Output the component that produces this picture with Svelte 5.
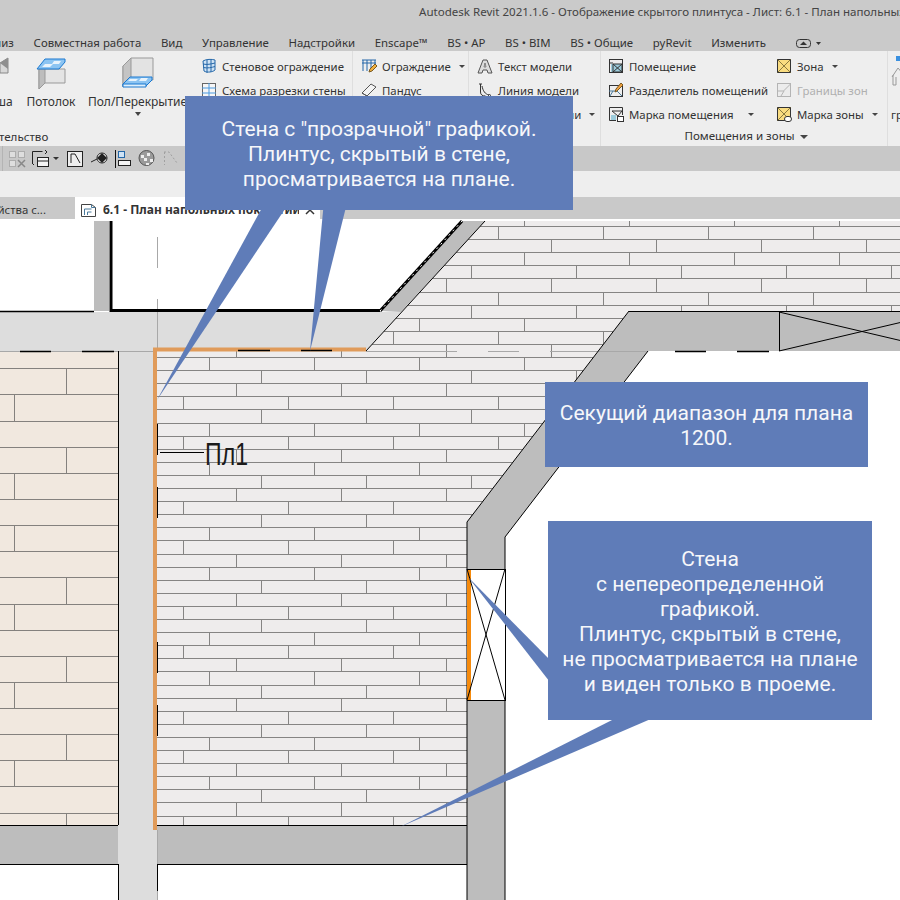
<script>
  const menu = ['Совместная работа', 'Вид', 'Управление', 'Надстройки', 'Enscape™', 'BS • AP', 'BS • BIM', 'BS • Общие', 'pyRevit', 'Изменить'];

  // плитка справа: шаг рядов 13.1, сдвиг швов повторяется через 8 рядов
  const phaseX = { 1: 235.5, 2: 261.3, 3: 183.3, 4: 209.3 };
  const cycle = [1, 4, 2, 1, 3, 2, 4, 3];
  let tileLines = '';
  let tileJoints = '';
  for (let k = -11; k <= 36; k++) {
    const bottom = Math.round(357 + 13.1 * k);
    const top = Math.round(357 + 13.1 * (k - 1));
    tileLines += `M150 ${bottom + 0.5}H900`;
    const base = phaseX[cycle[((k % 8) + 8) % 8]] % 105;
    for (let x = base; x < 900; x += 105) {
      tileJoints += `M${Math.round(x) + 0.5} ${top}V${bottom}`;
    }
  }

  // плитка слева: шаг рядов 26.13, швы перечислены по рядам сверху вниз
  const beigeRows = [0, 66, 14, 0, 66, 14, 0, 14, 0, 66, 14, 0, 66, 14, 0, 66, 14, 0, 66];
  let beigeLines = '';
  let beigeJoints = '';
  beigeRows.forEach((x, i) => {
    const top = Math.round(342.2 + 26.13 * i);
    const bottom = Math.round(342.2 + 26.13 * (i + 1));
    beigeLines += `M0 ${bottom + 0.5}H118`;
    if (x) beigeJoints += `M${x + 0.5} ${top}V${bottom}`;
  });
</script>

<div class="page">
  <header class="titlebar">Autodesk Revit 2021.1.6 - Отображение скрытого плинтуса - Лист: 6.1 - План напольных покрытий</header>

  <nav class="menu">
    <span class="clipped">Анализ</span>
    {#each menu as item}
      <span>{item}</span>
    {/each}
    <svg class="menu-toggle" width="26" height="12" viewBox="0 0 26 12">
      <rect x="0.5" y="2.5" width="14" height="8" rx="3" fill="none" stroke="#333" />
      <path d="M4 8h7L7.500 4.500z" fill="#333" />
      <path d="M20 5h5l-2.500 3z" fill="#333" />
    </svg>
  </nav>

  <section class="ribbon">
    <div class="group g1">
      <div class="bigs">
        <div class="big krysha">
          <svg width="40" height="34" viewBox="0 0 40 34">
            <path d="M28 7l8-5v15h-8z" fill="#d8d8d8" stroke="#888" />
            <path d="M36 2l-8 5 8 6z" fill="#8f8f8f" />
          </svg>
          <span>Крыша</span>
        </div>
        <div class="big potolok">
          <svg width="34" height="34" viewBox="0 0 34 34">
            <path d="M5 13h26v14H11l-6 6z" fill="#e4e4e4" stroke="#999" />
            <path d="M5 13v20l6-6V13z" fill="#bdbdbd" stroke="#999" />
            <path d="M3 13L11 3h20v3l-6 7z" fill="#8cc4f2" stroke="#1a78d0" />
            <path d="M11 8h8l-3 3H8zM20 5h7l-2 3h-7z" fill="#e8f3fc" />
          </svg>
          <span>Потолок</span>
        </div>
        <div class="big pol">
          <svg width="34" height="34" viewBox="0 0 34 34">
            <path d="M2 10l8-8h22v22H10L2 31z" fill="#e3e3e3" stroke="#999" />
            <path d="M2 10l8-8v22l-8 7z" fill="#c4c4c4" stroke="#999" />
            <path d="M2 28l7-7h22v3l-6 6H2z" fill="#8cc4f2" stroke="#1a78d0" />
            <path d="M7 25h8l2-2H9zM18 25h7l2-3h-7z" fill="#e8f3fc" />
            <path d="M2 28v3h23v-3z" fill="#dff0fc" stroke="#1a78d0" />
          </svg>
          <span>Пол/Перекрытие</span>
          <i class="caret"></i>
        </div>
      </div>
      <div class="group-label clipped-label">Строительство</div>
    </div>

    <div class="group g2">
      <div class="row">
        <svg width="16" height="16" viewBox="0 0 16 16" fill="none" stroke="#2467a8">
          <path d="M2 3c3-2 9-2 12-1v10c-2 2-8 3-11 1z" fill="#cfe3f5" />
          <path d="M2 6c4 1 8 0 12-1M2.500 9.500c4 1 8 0 11.500-1M6 2v13M10 2v12" />
        </svg>
        <span>Стеновое ограждение</span>
      </div>
      <div class="row">
        <svg width="16" height="16" viewBox="0 0 16 16" fill="none">
          <rect x="1.500" y="1.500" width="13" height="13" fill="#f6f6f6" stroke="#666" />
          <path d="M1 6h14M1 11h14M8 1v14" stroke="#4a9ae0" />
        </svg>
        <span>Схема разрезки стены</span>
      </div>
      <div class="row"><span class="spacer"></span><span>Импост</span></div>
    </div>

    <div class="group g3">
      <div class="row">
        <svg width="16" height="16" viewBox="0 0 16 16" fill="none">
          <path d="M1 2h14M1 5h14M2 2v11M6 2v11M10 2v8M14 2v5" stroke="#2467a8" />
          <path d="M8 14l1-3 5-5 2 2-5 5z" fill="#f0b040" stroke="#7a5a20" />
        </svg>
        <span>Ограждение</span>
        <i class="tri"></i>
      </div>
      <div class="row">
        <svg width="16" height="16" viewBox="0 0 16 16" fill="#f4f4f4" stroke="#555">
          <path d="M1 11l9-9 5 3-9 9z" />
          <path d="M1 11l5 3" />
        </svg>
        <span>Пандус</span>
      </div>
      <div class="row"><span class="spacer"></span><span>Лестница</span></div>
    </div>

    <div class="group g4">
      <div class="row">
        <svg width="16" height="16" viewBox="0 0 16 16">
          <path d="M6 2h4l5 13h-4l-1-3H6l-1 3H1z" fill="#ddd" stroke="#555" />
          <path d="M7 9h2L8 5z" fill="#fff" stroke="#555" stroke-width="0.700" />
        </svg>
        <span>Текст модели</span>
      </div>
      <div class="row">
        <svg width="16" height="16" viewBox="0 0 16 16" fill="none" stroke="#333">
          <path d="M2 2h3M3.500 2v8c0 3 2 4 5 4M5 4c1 5 3 8 7 9" />
          <circle cx="12.500" cy="13.500" r="1" />
        </svg>
        <span>Линия модели</span>
      </div>
      <div class="row">
        <span class="spacer"></span>
        <span>Группа модели</span>
        <i class="tri"></i>
      </div>
    </div>

    <div class="group g5">
      <div class="cols">
        <div class="col">
          <div class="row">
            <svg width="16" height="16" viewBox="0 0 16 16" fill="none">
              <rect x="1.500" y="1.500" width="13" height="13" stroke="#333" />
              <rect x="3" y="6" width="11" height="8" fill="#9cccdc" />
              <path d="M5 6h9v8H5zM5 6l9 8M14 6l-9 8M1 5h4" stroke="#333" />
            </svg>
            <span>Помещение</span>
          </div>
          <div class="row">
            <svg width="16" height="16" viewBox="0 0 16 16" fill="none">
              <rect x="1.500" y="3.500" width="13" height="11" stroke="#333" />
              <path d="M1 9h8l5 5M5 9l-3 5" stroke="#4a7a9c" />
              <path d="M7 10l1-3 5-6 2 2-6 6z" fill="#f0a040" stroke="#7a5a20" />
            </svg>
            <span>Разделитель помещений</span>
          </div>
          <div class="row">
            <svg width="16" height="16" viewBox="0 0 16 16" fill="none">
              <path d="M8 14.500H1.500v-13h13V9" stroke="#333" />
              <path d="M4 5h10M4 5l6 5 4-5" stroke="#333" />
              <rect x="3" y="9" width="5" height="5" fill="#9cccdc" />
              <rect x="9.500" y="10.500" width="6" height="5" fill="#fff" stroke="#333" />
            </svg>
            <span>Марка помещения</span>
            <i class="tri wide"></i>
          </div>
        </div>
        <div class="col second">
          <div class="row">
            <svg width="16" height="16" viewBox="0 0 16 16" fill="#f9dc80" stroke="#333">
              <rect x="1.500" y="1.500" width="13" height="13" />
              <path d="M1.500 1.500l13 13M14.500 1.500l-13 13" fill="none" stroke="#8a7a40" />
            </svg>
            <span class="zona">Зона</span>
            <i class="tri"></i>
          </div>
          <div class="row dim">
            <svg width="16" height="16" viewBox="0 0 16 16" fill="#ececec" stroke="#b4b4b4">
              <rect x="1.500" y="1.500" width="13" height="13" />
              <path d="M1.500 9h6l7-7M5 14l3-5" fill="none" />
            </svg>
            <span>Границы зон</span>
          </div>
          <div class="row">
            <svg width="16" height="16" viewBox="0 0 16 16" stroke="#333">
              <rect x="1.500" y="1.500" width="13" height="13" fill="#f9dc80" />
              <path d="M1.500 1.500l13 13M14.500 1.500l-13 13" fill="none" stroke="#8a7a40" />
              <rect x="8.500" y="10.500" width="7" height="5" rx="2.500" fill="#fff" />
            </svg>
            <span>Марка зоны</span>
            <i class="tri"></i>
          </div>
        </div>
      </div>
      <div class="group-label">Помещения и зоны <i class="tri label-tri"></i></div>
    </div>

    <div class="group g6">
      <svg width="14" height="36" viewBox="0 0 14 36" fill="none" stroke="#999">
        <rect x="5" y="1" width="6" height="5" fill="#3a90e0" stroke="none" />
        <path d="M1 22l6-9 6 7M2 20v10h3v-8" />
      </svg>
      <span class="g6-text">гр</span>
    </div>
  </section>

  <div class="toolbar">
    <svg width="200" height="25" viewBox="0 146 200 25" fill="none">
      <path d="M2.500 146v25" stroke="#b4b4b4" />
      <g stroke="#adadad">
        <rect x="9.500" y="151.500" width="6" height="6" fill="#dedede" />
        <rect x="18.500" y="151.500" width="6" height="6" fill="#dedede" />
        <rect x="9.500" y="160.500" width="6" height="6" fill="#dedede" />
        <path d="M18 160l7 7M25 160l-7 7" stroke="#888" stroke-width="1.500" />
      </g>
      <g stroke="#222">
        <path d="M32.500 163v-11.500h10" />
        <rect x="37.500" y="157.500" width="11" height="9" fill="#f4f4f4" />
        <path d="M37 161h12M45 150l2 2-2 2M32 163l2 2" />
      </g>
      <path d="M53 157h6l-3 3z" fill="#333" />
      <rect x="67.500" y="151.500" width="15" height="15" fill="#eee" stroke="#222" />
      <path d="M71 154v9M71 154h4l5 9" stroke="#222" />
      <path d="M91 162l6-3" stroke="#222" />
      <circle cx="102" cy="158" r="5" fill="#fff" stroke="#222" />
      <path d="M97 158l5-5 5 5-5 5z" fill="#222" />
      <path d="M115.500 150v18" stroke="#111" />
      <rect x="118.500" y="151.500" width="6" height="6" fill="#cfe3f5" stroke="#2467a8" />
      <rect x="118.500" y="160.500" width="12" height="5" fill="#f4f4f4" stroke="#222" />
      <circle cx="146.500" cy="158" r="7.500" fill="#9a9a9a" stroke="#555" />
      <path d="M141 155h3v3h-3zM147 153h3v3h-3zM144 158h3v3h-3zM150 159h3v3h-3zM146 163h3v2h-3z" fill="#ededed" />
      <path d="M164.500 152v13M164 152h5l8 11" stroke="#a0a0a0" stroke-dasharray="2 2" />
    </svg>
  </div>

  <div class="blank-strip"></div>

  <div class="tabs">
    <span class="tab-inactive">Свойства с...</span>
    <div class="tab-active">
      <svg width="17" height="16" viewBox="0 0 17 16" fill="none" stroke="#444">
        <path d="M1.500 2.500h10l4 3v9h-14z" fill="#fff" />
        <path d="M11.500 2.500v3h4M4.500 13v-6h7M7.500 13v-3h4" stroke="#4a7a9c" />
      </svg>
      <span>6.1 - План напольных покрытий...</span>
      <svg class="tab-close" width="10" height="10" viewBox="0 0 10 10">
        <path d="M1 1l8 8M9 1l-8 8" stroke="#333" stroke-width="1.500" />
      </svg>
    </div>
  </div>

  <!-- чертёж -->
  <svg class="plan" width="900" height="681" viewBox="0 219 900 681">
    <defs>
      <clipPath id="tileClip">
        <polygon points="485,221 900,221 900,311 629,311 467,522 467,825 157,825 157,351 366,351" />
      </clipPath>
    </defs>

    <!-- тонированные полы -->
    <rect x="0" y="351" width="118" height="474" fill="#f1e8df" />
    <path d={beigeLines} stroke="#84817e" fill="none" shape-rendering="crispEdges" />
    <path d={beigeJoints} stroke="#84817e" fill="none" shape-rendering="crispEdges" />

    <polygon points="485,221 900,221 900,311 629,311 467,522 467,825 157,825 157,351 366,351" fill="#eeecec" />
    <g clip-path="url(#tileClip)" shape-rendering="crispEdges">
      <path d={tileLines} stroke="#858483" fill="none" />
      <path d={tileJoints} stroke="#858483" fill="none" />
    </g>

    <!-- стены -->
    <polygon points="380,311 462,221 485,221 401,312" fill="#bdbdbd" />
    <rect x="94" y="221" width="15" height="90" fill="#bdbdbd" />
    <polygon points="0,312 401,312 366,351 0,351" fill="#dddddd" />
    <rect x="118" y="312" width="39" height="588" fill="#dddddd" />
    <rect x="0" y="825" width="118" height="39" fill="#bdbdbd" />
    <rect x="157" y="825" width="310" height="39" fill="#bdbdbd" />
    <polygon points="629,311 900,311 900,351 648,351 505,537 505,900 467,900 467,522" fill="#bdbdbd" />

    <!-- линии секущего диапазона -->
    <g fill="none" stroke="#a8a8a8">
      <path d="M0 351.500H157M366 351.500H457M488 351.500H519M550 351.500H648" />
      <path d="M157.500 237V268M157.500 299V348M157.500 830V864M157.500 891V900" />
    </g>

    <!-- контуры -->
    <g fill="none" stroke="#000">
      <path d="M0 311.500H94" stroke-width="1.500" />
      <path d="M111 221V310.500H380" stroke-width="3" />
      <path d="M380 311L462 221" stroke-width="3" />
      <path d="M366 351L485 221" />
      <path d="M118.500 351V825M118.500 864V900" />
      <path d="M0 825.500H118M157 825.500H467M0 864.500H118M157 864.500H467" />
      <path d="M157.500 864V891" />
      <path d="M629 311.500H900M629 311L467 522V900M648 351L505 537V900" />
      <path d="M675 351.500H706M737 351.500H769M20 351.500H51M82 351.500H114" stroke-width="1.500" />
    </g>
    <path d="M380 311L462 221" stroke="#fff" stroke-dasharray="2 4" fill="none" />

    <!-- проём справа вверху -->
    <path d="M779.500 312V351M779 312L945 351M779 351L945 312" stroke="#000" fill="none" />

    <!-- проём в стене -->
    <rect x="467.500" y="569.500" width="38" height="131" fill="#fff" stroke="#000" />
    <rect x="467" y="570" width="4" height="130" fill="#f58a0c" />
    <path d="M467 569L505 700M505 569L467 700" stroke="#000" fill="none" />

    <!-- видимый плинтус -->
    <path d="M155 830V349.500H366" fill="none" stroke="#e09b5a" stroke-width="4" />
    <g fill="none" stroke="#000">
      <path d="M157.500 424V455M157.500 487V518M157.500 642V673M157.500 705V736" />
      <path d="M238 350.500H270M301 350.500H332" stroke-width="1.500" />
      <path d="M160 452.500H204" />
    </g>
    <text x="205" y="465" class="tag" textLength="43" lengthAdjust="spacingAndGlyphs">Пл1</text>
  </svg>

  <!-- выноски -->
  <svg class="tails" width="900" height="900" viewBox="0 0 900 900">
    <polygon points="157,400 263.500,205 287.700,205" />
    <polygon points="310,351 323.600,205 346.500,205" />
    <polygon points="468,577 553,663 553,686" />
    <polygon points="400,827 622,715 660,715" />
  </svg>
  <div class="callout c1">Стена с "прозрачной" графикой.<br />Плинтус, скрытый в стене,<br />просматривается на плане.</div>
  <div class="callout c2">Секущий диапазон для плана<br />1200.</div>
  <div class="callout c3">Стена<br />с непереопределенной<br />графикой.<br />Плинтус, скрытый в стене,<br />не просматривается на плане<br />и виден только в проеме.</div>
</div>

<style>
  :global(body) {
    margin: 0;
    background: #fff;
  }

  .page {
    position: relative;
    width: 900px;
    height: 900px;
    overflow: hidden;
    font-family: "Noto Sans", "Open Sans", sans-serif;
    font-size: 11.4px;
    color: #333;
  }

  .titlebar {
    height: 34px;
    line-height: 24px;
    padding-left: 419px;
    background: #cacaca;
    white-space: nowrap;
    color: #444;
    font-size: 11.55px;
  }

  .menu {
    display: flex;
    align-items: center;
    gap: 19.7px;
    height: 17px;
    background: #cacaca;
    white-space: nowrap;
  }

  .clipped {
    margin-left: -26px;
  }

  .menu-toggle {
    margin-left: 10px;
  }

  .ribbon {
    display: flex;
    height: 95px;
    background: #eeeeee;
    white-space: nowrap;
  }

  .group {
    box-sizing: border-box;
    position: relative;
    border-right: 1px solid #dedede;
    padding-top: 3px;
    flex: none;
  }

  .g1 { width: 195px; border-right: 0; padding-top: 5px; display: flex; flex-direction: column; }
  .g2 { width: 158px; padding-left: 6px; }
  .g3 { width: 116px; padding-left: 8px; }
  .g4 { width: 132px; padding-left: 8px; }
  .g5 { width: 287px; padding-left: 7px; }
  .g6 { width: 20px; border: 0; padding: 4px 0 0 3px; }

  .bigs {
    display: flex;
    height: 75px;
    font-size: 12px;
  }

  .big {
    display: flex;
    flex-direction: column;
    align-items: center;
  }

  .big span {
    margin-top: 4px;
    line-height: 16px;
  }

  .krysha { margin-left: -28px; width: 40px; }
  .potolok { margin-left: 15px; width: 48px; }
  .pol { margin-left: 14px; width: 97px; }

  .caret {
    width: 0;
    height: 0;
    margin-top: 2px;
    border: 3px solid transparent;
    border-top: 4px solid #444;
    border-bottom: 0;
  }

  .group-label {
    text-align: center;
    line-height: 18px;
    padding: 1px 3px 0 0;
    font-size: 11.6px;
  }

  .clipped-label {
    margin-left: -35px;
    text-align: left;
    padding: 0;
  }

  .row {
    display: flex;
    align-items: center;
    gap: 5px;
    height: 24px;
  }

  .spacer {
    width: 16px;
  }

  .tri {
    width: 0;
    height: 0;
    margin-left: 3px;
    border: 3px solid transparent;
    border-top: 3px solid #444;
    border-bottom: 0;
  }

  .tri.wide {
    margin-left: 9px;
  }

  .label-tri {
    display: inline-block;
    margin-left: 2px;
    border-width: 4px;
    border-top-width: 4px;
    border-bottom: 0;
    vertical-align: middle;
  }

  .cols {
    display: flex;
    height: 72px;
  }

  .col {
    width: 168px;
  }

  .col.second {
    width: 110px;
  }

  .dim {
    color: #b0b0b0;
  }

  .g6-text {
    position: absolute;
    left: 3px;
    top: 56px;
  }

  .toolbar {
    height: 25px;
    background: #c8c8c8;
  }

  .toolbar svg {
    display: block;
  }

  .blank-strip {
    height: 26px;
    background: #eeeeee;
  }

  .tabs {
    display: flex;
    height: 22px;
    background: #c9c9c9;
    white-space: nowrap;
  }

  .tab-inactive {
    width: 98px;
    margin-left: -23px;
    line-height: 26px;
    flex: none;
    overflow: hidden;
  }

  .tab-active {
    display: flex;
    align-items: center;
    width: 245px;
    box-sizing: border-box;
    padding: 3px 0 0 5px;
    background: #fff;
    font-weight: 700;
    font-size: 12px;
    overflow: hidden;
  }

  .tab-active span {
    margin-left: 6px;
    width: 196px;
    overflow: hidden;
  }

  .tab-close {
    margin-left: 6px;
    flex: none;
  }

  .plan {
    display: block;
  }

  .tag {
    font-family: "Liberation Sans", Arial, sans-serif;
    font-size: 32px;
    fill: #1a1a1a;
  }

  .tails {
    position: absolute;
    inset: 0;
    pointer-events: none;
  }

  .tails polygon {
    fill: #5f7cb8;
  }

  .callout {
    position: absolute;
    box-sizing: border-box;
    display: flex;
    align-items: center;
    justify-content: center;
    padding-top: 2px;
    background: #5f7cb8;
    color: #f6f7fa;
    font-family: Roboto, "Liberation Sans", sans-serif;
    font-size: 21px;
    line-height: 25px;
    text-align: center;
  }

  .c1 { left: 185px; top: 96px; width: 388px; height: 114px; }
  .c2 { left: 545px; top: 382px; width: 323px; height: 85px; }
  .c3 { left: 548px; top: 521px; width: 324px; height: 199px; }
</style>
